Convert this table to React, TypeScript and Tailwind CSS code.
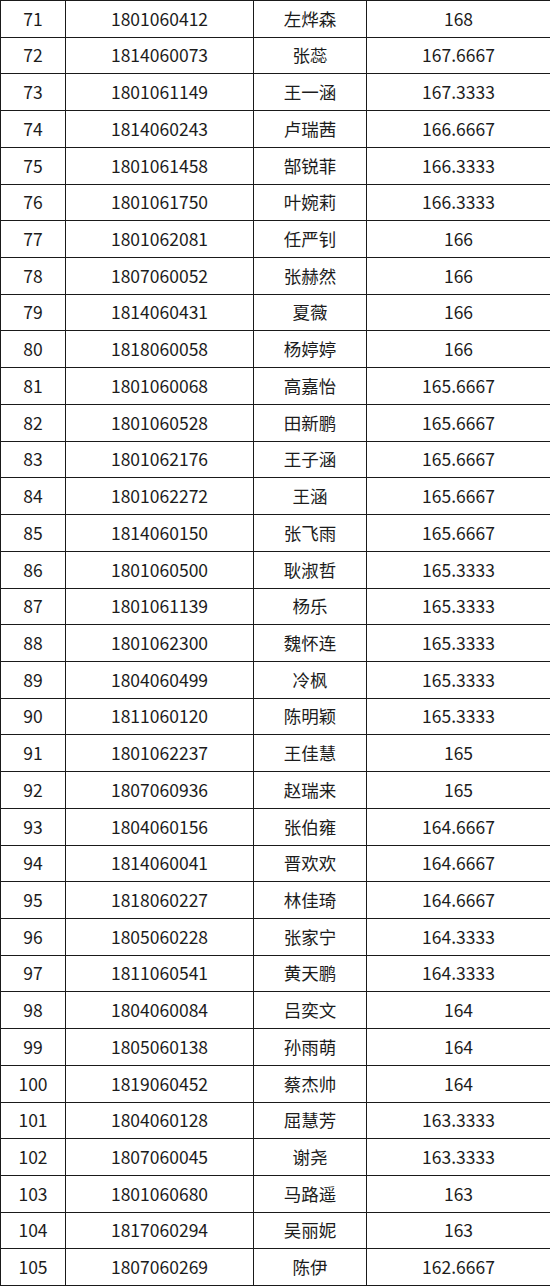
import React from "react";

const rows: [number, string, string, string][] = [
  [71, "1801060412", "左烨森", "168"],
  [72, "1814060073", "张蕊", "167.6667"],
  [73, "1801061149", "王一涵", "167.3333"],
  [74, "1814060243", "卢瑞茜", "166.6667"],
  [75, "1801061458", "郜锐菲", "166.3333"],
  [76, "1801061750", "叶婉莉", "166.3333"],
  [77, "1801062081", "任严钊", "166"],
  [78, "1807060052", "张赫然", "166"],
  [79, "1814060431", "夏薇", "166"],
  [80, "1818060058", "杨婷婷", "166"],
  [81, "1801060068", "高嘉怡", "165.6667"],
  [82, "1801060528", "田新鹏", "165.6667"],
  [83, "1801062176", "王子涵", "165.6667"],
  [84, "1801062272", "王涵", "165.6667"],
  [85, "1814060150", "张飞雨", "165.6667"],
  [86, "1801060500", "耿淑哲", "165.3333"],
  [87, "1801061139", "杨乐", "165.3333"],
  [88, "1801062300", "魏怀连", "165.3333"],
  [89, "1804060499", "冷枫", "165.3333"],
  [90, "1811060120", "陈明颖", "165.3333"],
  [91, "1801062237", "王佳慧", "165"],
  [92, "1807060936", "赵瑞来", "165"],
  [93, "1804060156", "张伯雍", "164.6667"],
  [94, "1814060041", "晋欢欢", "164.6667"],
  [95, "1818060227", "林佳琦", "164.6667"],
  [96, "1805060228", "张家宁", "164.3333"],
  [97, "1811060541", "黄天鹏", "164.3333"],
  [98, "1804060084", "吕奕文", "164"],
  [99, "1805060138", "孙雨萌", "164"],
  [100, "1819060452", "蔡杰帅", "164"],
  [101, "1804060128", "屈慧芳", "163.3333"],
  [102, "1807060045", "谢尧", "163.3333"],
  [103, "1801060680", "马路遥", "163"],
  [104, "1817060294", "吴丽妮", "163"],
  [105, "1807060269", "陈伊", "162.6667"],
];

const cell = "border border-[#1a1a1a] text-center align-middle p-0";

export default function App() {
  return (
    <div className="w-[550px] bg-white">
      <table
        className="w-[550px] table-fixed border-collapse text-[17.5px] text-[#1c1c1c]"
        style={{ fontFamily: '"Noto Sans CJK SC", "Noto Sans", sans-serif' }}
      >
        <colgroup>
          <col className="w-[65px]" />
          <col className="w-[188px]" />
          <col className="w-[113px]" />
          <col className="w-[184px]" />
        </colgroup>
        <tbody>
          {rows.map(([no, id, name, score]) => (
            <tr key={no} className="h-[36.72px]">
              <td className={cell}>{no}</td>
              <td className={cell}>{id}</td>
              <td className={cell}>{name}</td>
              <td className={cell}>{score}</td>
            </tr>
          ))}
        </tbody>
      </table>
    </div>
  );
}
